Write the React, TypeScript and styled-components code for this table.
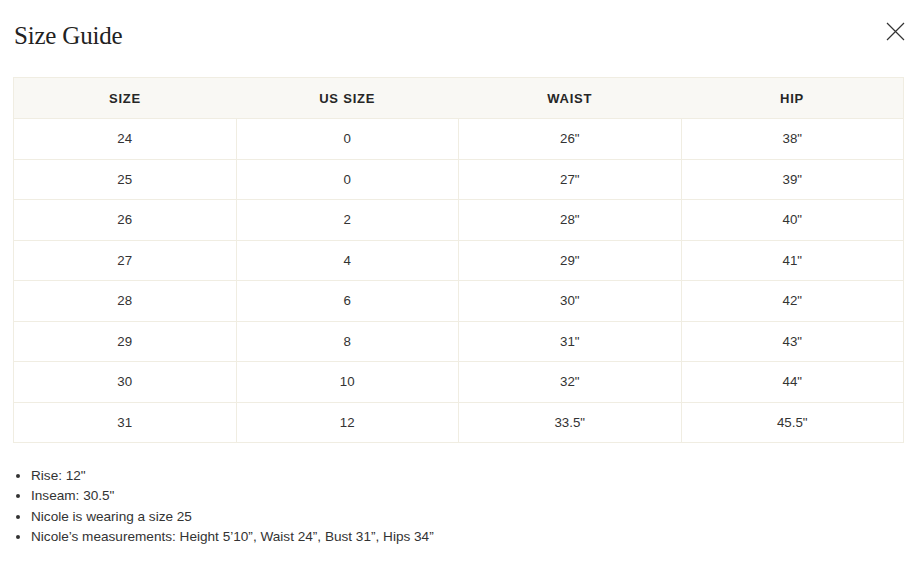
import React from "react";
import styled, { createGlobalStyle } from "styled-components";

const Global = createGlobalStyle`
  html, body { margin: 0; padding: 0; background: #fff; }
  body { font-family: "Liberation Sans", Arial, sans-serif; color: #2b2b2b; }
`;

const Page = styled.div`
  width: 912px;
  box-sizing: border-box;
  padding: 17px 8px 0 13px;
`;

const Header = styled.div`
  display: flex;
  justify-content: space-between;
  align-items: flex-start;
  height: 60px;
`;

const Title = styled.h2`
  margin: 4px 0 0 1px;
  font-family: "Liberation Serif", "Times New Roman", serif;
  font-weight: 400;
  font-size: 25px;
  line-height: 30px;
  color: #222;
  letter-spacing: -0.2px;
`;

const Close = styled.button`
  border: 0;
  background: none;
  padding: 0;
  margin: 4px -1px 0 0;
  width: 20px;
  height: 20px;
  display: flex;
  align-items: center;
  justify-content: center;
  cursor: pointer;
`;

const Table = styled.table`
  width: 891px;
  border-collapse: collapse;
  table-layout: fixed;
  border: 1px solid #f0ede2;
`;

const Th = styled.th`
  background: #f9f8f4;
  height: 40px;
  font-size: 13px;
  font-weight: 700;
  letter-spacing: 0.8px;
  color: #262626;
  text-align: center;
  padding: 0;
`;

const Td = styled.td`
  height: 39.5px;
  border: 1px solid #f0ede2;
  text-align: center;
  font-size: 13.3px;
  color: #333;
  padding: 0;
`;

const Notes = styled.ul`
  margin: 23px 0 0 0;
  padding-left: 18px;
  font-size: 13.6px;
  line-height: 20.3px;
  color: #333;
`;

const Note = styled.li`
  height: 20.3px;
`;

const rows = [
  ["24", "0", '26"', '38"'],
  ["25", "0", '27"', '39"'],
  ["26", "2", '28"', '40"'],
  ["27", "4", '29"', '41"'],
  ["28", "6", '30"', '42"'],
  ["29", "8", '31"', '43"'],
  ["30", "10", '32"', '44"'],
  ["31", "12", '33.5"', '45.5"'],
];

export default function App() {
  return (
    <Page>
      <Global />
      <Header>
        <Title>Size Guide</Title>
        <Close aria-label="Close">
          <svg width="19" height="19" viewBox="0 0 19 19">
            <path d="M1 1 L18 18 M18 1 L1 18" stroke="#333" strokeWidth="1.2" fill="none" />
          </svg>
        </Close>
      </Header>
      <Table>
        <thead>
          <tr>
            <Th>SIZE</Th>
            <Th>US SIZE</Th>
            <Th>WAIST</Th>
            <Th>HIP</Th>
          </tr>
        </thead>
        <tbody>
          {rows.map((r) => (
            <tr key={r[0]}>
              {r.map((c, i) => (
                <Td key={i}>{c}</Td>
              ))}
            </tr>
          ))}
        </tbody>
      </Table>
      <Notes>
        <Note>Rise: 12"</Note>
        <Note>Inseam: 30.5"</Note>
        <Note>Nicole is wearing a size 25</Note>
        <Note>Nicole’s measurements: Height 5’10”, Waist 24”, Bust 31”, Hips 34”</Note>
      </Notes>
    </Page>
  );
}
